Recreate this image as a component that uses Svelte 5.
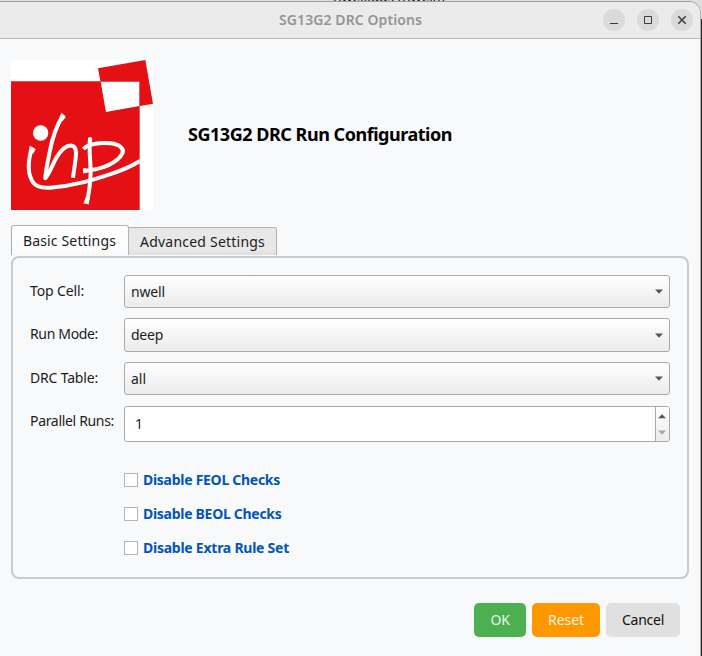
<script>
  let topCell = $state('nwell');
  let runMode = $state('deep');
  let table = $state('all');
  let runs = $state(1);

  const rows = $derived([
    { label: 'Top Cell:', value: topCell, cls: 'top', w: 54, vw: 34 },
    { label: 'Run Mode:', value: runMode, cls: 'mode', w: 68, vw: 32 },
    { label: 'DRC Table:', value: table, cls: 'table', w: 68, vw: 15 }
  ]);
  const checks = [
    { label: 'Disable FEOL Checks', w: 137 },
    { label: 'Disable BEOL Checks', w: 138.5 },
    { label: 'Disable Extra Rule Set', w: 146 }
  ];

  // Spreads or tightens a label so that it occupies the given width.
  function fit(node, width) {
    const range = document.createRange();
    range.selectNodeContents(node);
    const natural = range.getBoundingClientRect().width;
    const count = node.textContent.length;
    if (natural) node.style.letterSpacing = `${(width - natural) / count}px`;
  }
</script>

<div class="desktop">
  <div class="behind"><span use:fit={112}>nwell.gds [nwell]]</span></div>
  <div class="window">
    <header>
      <span class="title"><span use:fit={143}>SG13G2 DRC Options</span></span>
      <div class="controls">
        <button aria-label="Minimize"><svg viewBox="0 0 22 22"><path d="M7 14.5h8" /></svg></button>
        <button aria-label="Maximize"><svg viewBox="0 0 22 22"><path d="M7.5 7.5h7v7h-7z" /></svg></button>
        <button aria-label="Close"><svg viewBox="0 0 22 22"><path d="M7.3 7.3l7.4 7.4M14.7 7.3l-7.4 7.4" stroke-width="1.5" /></svg></button>
      </div>
    </header>

    <section class="brand">
      <svg class="logo" viewBox="33 30 426 450" preserveAspectRatio="none">
        <path fill="#fff" d="M33 30h426v450H33z" />
        <path fill="#e41013" d="M33 94h386v386H33zM294 55L436 30L459 161L318 186z" />
        <path fill="#fff" d="M302 95H418V168L318 186z" />
        <circle cx="122" cy="249" r="23" fill="#fff" />
        <g fill="none" stroke="#fff" stroke-linejoin="round">
          <path stroke-width="12" d="M98 292C86 316 82 360 92 383C101 410 122 415 151 413C226 407 282 389 338 370C368 360 395 348 420 333" />
          <path stroke-width="12" d="M190 194C174 220 158 258 149 306C144 333 137 360 136 385C151 365 158 342 170 322C185 297 202 285 216 287C238 291 224 338 219 383" />
          <path stroke-width="12" d="M271 264C265 297 272 330 272 370C271 404 266 433 260 462M250 297C265 280 304 277 332 280C358 283 374 296 367 310C355 339 303 359 250 363" />
        </g>
        <path fill="#fff" d="M89 287L107 298L99 312L86 306zM184 188L198 201L187 214L176 208zM264 263L274 261L277 289L263 289zM250 461L266 457L270 440L258 440zM249 355L258 354L262 369L249 370z" />
      </svg>
      <h1 use:fit={264}>SG13G2 DRC Run Configuration</h1>
    </section>

    <nav>
      <button class="tab active"><span use:fit={93}>Basic Settings</span></button>
      <button class="tab"><span use:fit={125}>Advanced Settings</span></button>
    </nav>

    <main>
      {#each rows as row}
        <div class="row {row.cls}">
          <span class="label"><span use:fit={row.w}>{row.label}</span></span>
          <button class="combo">
            <span use:fit={row.vw}>{row.value}</span>
            <svg width="8" height="5" viewBox="0 0 8 5"><path d="M0 .5h8L4 4.7z" fill="#555" /></svg>
          </button>
        </div>
      {/each}
      <div class="row runs">
        <span class="label"><span use:fit={84}>Parallel Runs:</span></span>
        <div class="spin">
          <span class="value">{runs}</span>
          <div class="steps">
            <svg width="8" height="5" viewBox="0 0 8 5"><path d="M0 4.3h8L4 .2z" fill="#555" /></svg>
            <svg width="8" height="5" viewBox="0 0 8 5"><path d="M0 .5h8L4 4.7z" fill="#a5a5a5" /></svg>
          </div>
        </div>
      </div>
      <div class="checks">
        {#each checks as check}
          <label><span class="box"></span><span use:fit={check.w}>{check.label}</span></label>
        {/each}
      </div>
    </main>

    <footer>
      <button class="ok"><span use:fit={19}>OK</span></button>
      <button class="reset"><span use:fit={36}>Reset</span></button>
      <button class="cancel"><span use:fit={42}>Cancel</span></button>
    </footer>
  </div>
</div>

<style>
  :global(body) { margin: 0; overflow: hidden; }
  .desktop {
    position: relative;
    width: 702px;
    height: 656px;
    overflow: hidden;
    background: linear-gradient(#dededc 0 19px, #242424 19px);
    font: 14px/20px "Noto Sans", "Open Sans", sans-serif;
    color: #1c1c1c;
  }
  .behind {
    position: absolute;
    left: 333px;
    top: -12px;
    font-size: 14px;
    line-height: 18px;
    color: #111;
  }
  .window {
    position: relative;
    box-sizing: border-box;
    width: 701px;
    height: 655px;
    margin-top: 1px;
    border-top: 1px solid #9d9d9d;
    border-right: 1px solid #b0b0b0;
    border-radius: 0 12px 0 0;
    overflow: hidden;
    background: #f8f9fb;
  }
  button { font: inherit; color: inherit; margin: 0; padding: 0; border: 0; box-sizing: border-box; }
  span, h1 { white-space: nowrap; }
  header {
    box-sizing: border-box;
    height: 37px;
    background: #ebebeb;
    border-bottom: 1px solid #b9b9b9;
    display: flex;
    align-items: center;
    justify-content: space-between;
    padding: 0 7px 0 279px;
  }
  .title { color: #949494; font-weight: 600; }
  .controls { display: flex; gap: 12px; }
  .controls button { width: 22px; height: 22px; border-radius: 50%; background: #dadada; }
  .controls svg { display: block; width: 22px; height: 22px; fill: none; stroke: #3b3b3b; }
  .brand { display: flex; padding: 21px 0 0 11px; height: 150px; }
  .logo { width: 142px; height: 150px; }
  h1 { margin: 62px 0 0 35px; font-size: 18px; line-height: 24px; font-weight: 700; color: #000; }
  nav { display: flex; align-items: flex-start; height: 31px; padding: 15px 0 0 11px; }
  .tab {
    width: 148px;
    height: 28px;
    margin-top: 2px;
    border: 1px solid #b2b2b2;
    border-left: 0;
    border-bottom: 0;
    border-radius: 0 3px 0 0;
    padding-left: 11px;
    text-align: left;
    background: linear-gradient(#e8e8e8 80%, #dfdfdf);
  }
  .tab.active { width: 118px; height: 30px; margin-top: 0; border-left: 1px solid #aaa; border-radius: 3px 3px 0 0; background: linear-gradient(#fff, #f9fafb); }
  main {
    box-sizing: border-box;
    width: 678px;
    height: 323px;
    margin-left: 11px;
    border: 2px solid #c8cacc;
    border-radius: 8px;
    padding: 17px 17px 0;
  }
  .row { display: flex; height: 33px; margin-bottom: 10px; }
  .row.mode { height: 34px; }
  .row.table { margin-bottom: 11px; }
  .row.runs { height: 36px; margin: 0; }
  .label { width: 94px; padding-top: 6px; flex: none; }
  .runs .label { padding-top: 5px; }
  .combo, .spin { flex: 1; border: 1px solid #a9a9a9; border-radius: 3px; display: flex; align-items: center; }
  .combo { justify-content: space-between; padding: 0 6px; background: linear-gradient(#fff, #ebebeb); }
  .spin { box-sizing: border-box; justify-content: space-between; background: #fff; }
  .value { padding-left: 10px; }
  .steps { width: 14px; height: 34px; border-left: 1px solid #a9a9a9; background: linear-gradient(#fff, #ececec); border-radius: 0 2px 2px 0; box-sizing: border-box; display: flex; flex-direction: column; align-items: flex-start; justify-content: space-between; padding: 7px 0 6px 2px; }
  .checks { margin: 28px 0 0 94px; display: flex; flex-direction: column; gap: 14px; }
  label { display: flex; align-items: center; gap: 5px; color: #0355b3; font-weight: 700; }
  .box { box-sizing: border-box; width: 14px; height: 14px; border: 1px solid #b4b4b4; background: #fff; }
  footer { display: flex; justify-content: flex-end; gap: 6px; margin: 24px 20px 0 0; }
  footer button { height: 34px; border-radius: 5px; }
  .ok { width: 52px; background: #4caf50; color: #e8f5e9; }
  .reset { width: 68px; background: #ff9800; color: #fff3e0; }
  .cancel { width: 74px; background: #e0e0e0; color: #111; }
</style>
